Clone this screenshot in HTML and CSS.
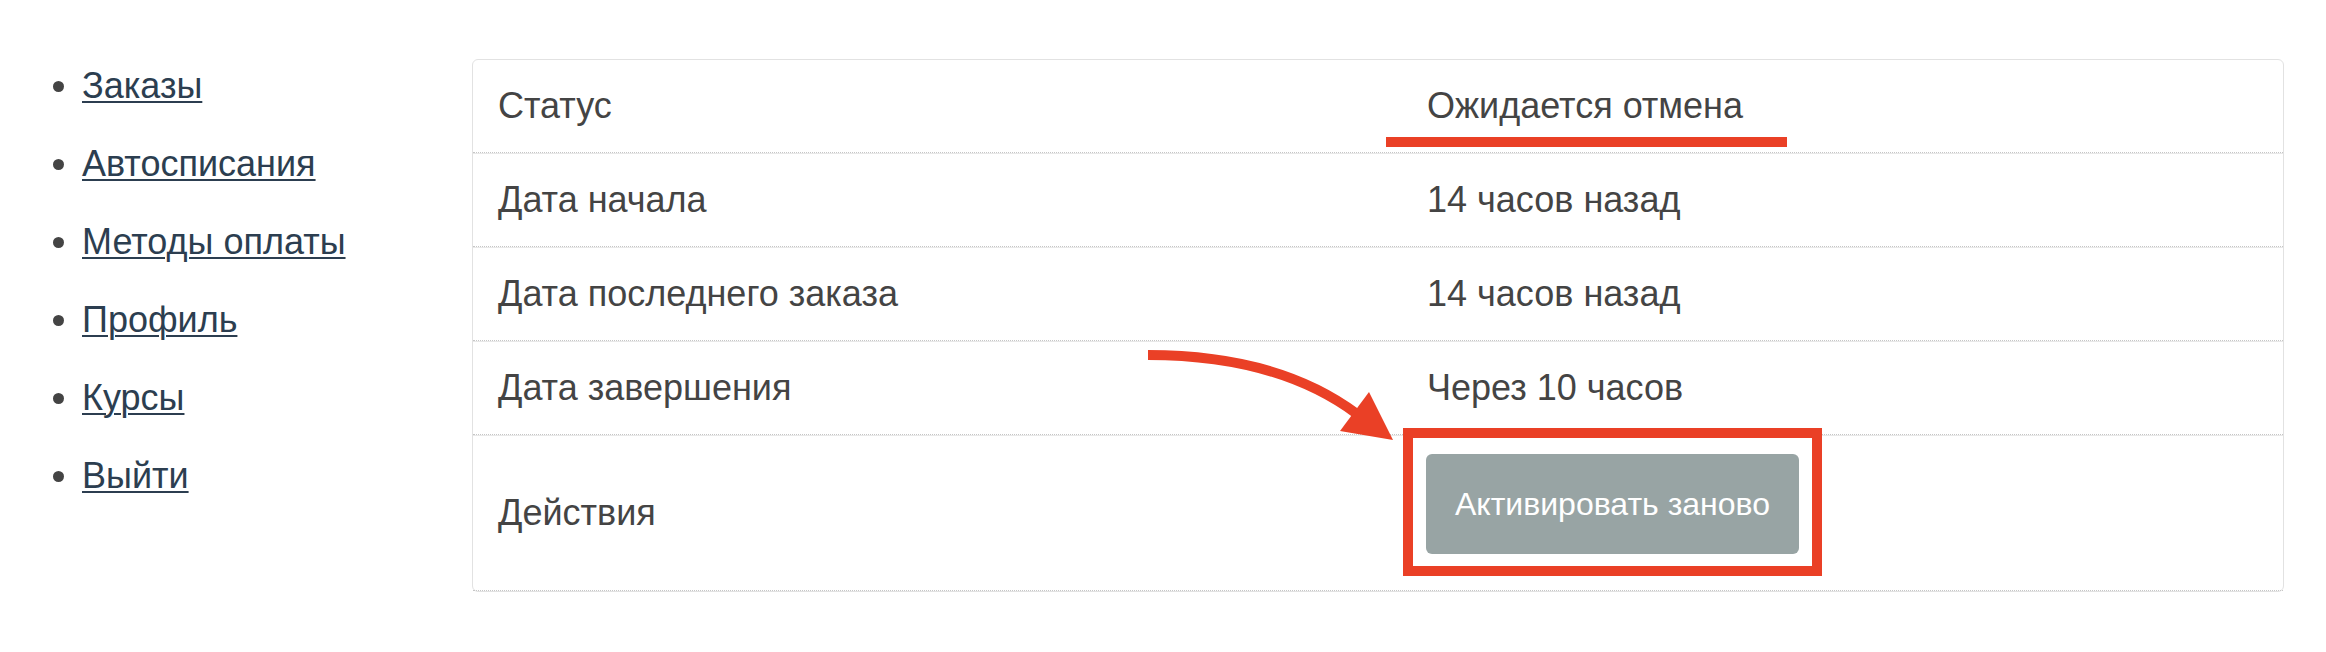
FILE: index.html
```html
<!DOCTYPE html>
<html lang="ru">
<head>
<meta charset="utf-8">
<title>Автосписание</title>
<link rel="stylesheet" href="styles.css">
</head>
<body>
<div class="page">
  <nav class="side">
    <ul class="menu">
      <li><a href="#">Заказы</a></li>
      <li><a href="#">Автосписания</a></li>
      <li><a href="#">Методы оплаты</a></li>
      <li><a href="#">Профиль</a></li>
      <li><a href="#">Курсы</a></li>
      <li><a href="#">Выйти</a></li>
    </ul>
  </nav>
  <main class="card">
    <div class="row">
      <div class="cell label">Статус</div>
      <div class="cell value">Ожидается отмена</div>
    </div>
    <div class="row">
      <div class="cell label">Дата начала</div>
      <div class="cell value">14 часов назад</div>
    </div>
    <div class="row">
      <div class="cell label">Дата последнего заказа</div>
      <div class="cell value">14 часов назад</div>
    </div>
    <div class="row">
      <div class="cell label">Дата завершения</div>
      <div class="cell value">Через 10 часов</div>
    </div>
    <div class="row last">
      <div class="cell label">Действия</div>
      <div class="cell value action"><button class="btn" type="button">Активировать заново</button></div>
    </div>
  </main>
</div>
<svg class="marks" width="2326" height="652" viewBox="0 0 2326 652" aria-hidden="true">
  <rect x="1386" y="137" width="401" height="10" fill="#ea4026"/>
  <path d="M1148 355 Q1278 355 1357 414" fill="none" stroke="#ea4026" stroke-width="10"/>
  <polygon points="1369,392 1393,440 1340,431" fill="#ea4026"/>
  <rect x="1408" y="433" width="409" height="138" fill="none" stroke="#ea4026" stroke-width="10"/>
</svg>
</body>
</html>
```
FILE: styles.css
```css
html, body {
  margin: 0;
  padding: 0;
  background: #ffffff;
}
body {
  font-family: "Liberation Sans", Arial, Helvetica, sans-serif;
  color: #444444;
}
.page {
  display: flex;
  align-items: flex-start;
  padding: 47px 42px 0 0;
}
.side {
  flex: 0 0 472px;
}
.menu {
  margin: 0;
  padding: 0 0 0 82px;
  font-size: 36px;
  line-height: 78px;
  color: #444;
}
.menu a {
  color: #2c3e50;
  text-decoration: underline;
  text-decoration-thickness: 2px;
  text-underline-offset: 3px;
}
.card {
  flex: 1;
  margin-top: 12px;
  border: 1px solid #e2e2e2;
  border-radius: 6px;
  font-size: 36px;
  line-height: 51px;
  color: #444444;
}
.row {
  display: grid;
  grid-template-columns: 928px 1fr;
  border-bottom: 1px dotted #c6c6c6;
}
.row + .row {
  border-top: 1px solid #e8e8e8;
}
.cell {
  padding: 20px 25px 21px 25px;
}
.value {
  padding-left: 26px;
}
.last .label {
  align-self: center;
}
.action {
  padding: 18px 25px 36px 25px;
}
.btn {
  display: block;
  width: 373px;
  height: 100px;
  border: none;
  border-radius: 6px;
  background: #98a4a4;
  color: #ffffff;
  font-family: "Liberation Sans", Arial, Helvetica, sans-serif;
  font-size: 32px;
  padding: 0;
}
.marks {
  position: absolute;
  left: 0;
  top: 0;
  pointer-events: none;
}
```
